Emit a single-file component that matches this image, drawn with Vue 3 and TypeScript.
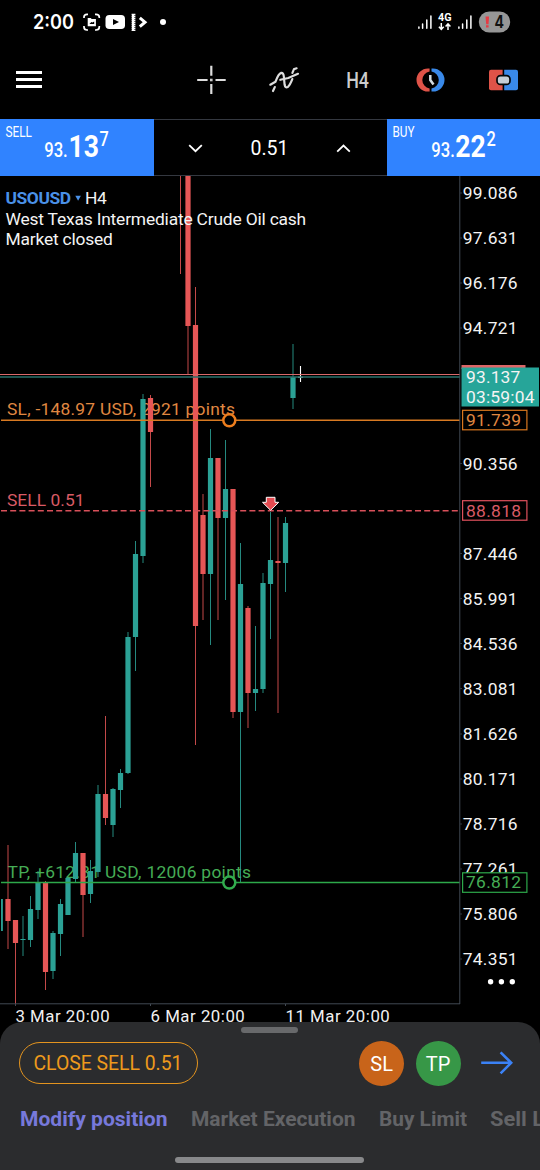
<script setup lang="ts">
type Candle = { x: number; high: number; low: number; top: number; bottom: number; up: boolean }

const raw: [number, number, number, number, number, number][] = [
  [8, 845, 949, 899, 921, 0],
  [15.5, 920, 1004, 920, 943, 0],
  [23, 916, 956, 939, 940, 1],
  [30.5, 896, 947, 909, 940, 1],
  [38, 871, 919, 882, 910, 1],
  [45.5, 881, 990, 883, 972, 0],
  [53, 931, 979, 933, 971, 1],
  [60.5, 899, 956, 904, 934, 1],
  [68, 877, 915, 878, 915, 1],
  [75.5, 842, 882, 853, 879, 1],
  [83, 853, 937, 853, 895, 0],
  [90.5, 860, 903, 871, 894, 1],
  [98, 785, 877, 794, 872, 1],
  [105.5, 716, 825, 794, 818, 0],
  [113, 788, 837, 789, 825, 1],
  [120.5, 769, 808, 773, 790, 1],
  [128, 632, 774, 637, 773, 1],
  [135.5, 541, 671, 554, 637, 1],
  [143, 394, 563, 399, 556, 1],
  [150.5, 395, 487, 398, 432, 0],
  [180.5, 170, 274, 170, 170, 0],
  [188, 170, 374, 170, 326, 0],
  [195.5, 287, 745, 325, 626, 0],
  [203, 494, 620, 515, 574, 0],
  [210.5, 429, 645, 458, 574, 1],
  [218, 458, 620, 458, 518, 0],
  [225.5, 440, 600, 489, 518, 1],
  [233, 489, 718, 489, 712, 0],
  [240.5, 543, 882, 584, 712, 1],
  [248, 606, 728, 608, 693, 0],
  [255.5, 626, 711, 689, 693, 1],
  [263, 573, 693, 583, 689, 1],
  [270.5, 512, 639, 560, 584, 1],
  [278, 517, 713, 561, 563, 0],
  [285.5, 517, 592, 523, 563, 1],
  [293, 344, 409, 377, 398, 1],
]
const candles: Candle[] = raw.map(([x, high, low, top, bottom, up]) => ({ x, high, low, top, bottom, up: up === 1 }))

const scale: { y: number; label: string }[] = [
  { y: 193, label: '99.086' },
  { y: 238, label: '97.631' },
  { y: 283, label: '96.176' },
  { y: 328, label: '94.721' },
  { y: 463.5, label: '90.356' },
  { y: 553.5, label: '87.446' },
  { y: 598.5, label: '85.991' },
  { y: 643.5, label: '84.536' },
  { y: 688.5, label: '83.081' },
  { y: 734, label: '81.626' },
  { y: 779, label: '80.171' },
  { y: 824, label: '78.716' },
  { y: 869, label: '77.261' },
  { y: 914, label: '75.806' },
  { y: 959, label: '74.351' },
]

const tabs: { label: string; width: number }[] = [
  { label: 'Modify position', width: 147.5 },
  { label: 'Market Execution', width: 164.5 },
  { label: 'Buy Limit', width: 88 },
  { label: 'Sell Limit', width: 92 },
]
</script>

<template>
  <div class="screen">
    <header class="status">
      <svg width="540" height="45" viewBox="0 0 540 45">
        <text x="33" y="28.7" class="clock" textLength="41" lengthAdjust="spacingAndGlyphs">2:00</text>
        <g fill="none" stroke="#fff" stroke-width="1.7">
          <path d="M84 18V17Q84 14.3 87 14.3H88M95 14.3H96Q99.3 14.3 99.3 17V18M99.3 26V27Q99.3 30 96 30H95M88 30H87Q84 30 84 27V26" />
        </g>
        <path fill="#fff" fill-rule="evenodd" d="M87.7 18h3l1 1h4.2v7.2H87.7z M89.4 24h4.8v-2.4l-1.8 1-1-.5z" />
        <rect x="105.5" y="15" width="19.5" height="14" rx="3.8" fill="#fff" />
        <path d="M113 19v6l6-3z" fill="#000" />
        <g fill="none" stroke="#fff">
          <path d="M133.5 13.8V31" stroke-width="3.8" stroke-dasharray="1.4 .6" />
          <path d="M133 14V30.5" stroke-width="2" />
          <path d="M139.8 17.8L145 22.2L139.8 26.6" stroke-width="3" />
        </g>
        <circle cx="163" cy="22" r="3" fill="#fff" />
        <g stroke="#fff" stroke-width="1.5" stroke-linecap="round">
          <path d="M418.9 27v1.2M422.6 24v4.2M426.8 20v8.2M430.9 16v12.2" />
          <path d="M458.9 27v1.2M462.6 24v4.2M466.8 20v8.2M470.9 16v12.2" />
        </g>
        <text x="438" y="20.6" class="net" textLength="13.5" lengthAdjust="spacingAndGlyphs">4G</text>
        <g fill="none" stroke="#fff" stroke-width="1.5">
          <path d="M441.3 23v6.2M438.9 26.7l2.4 2.6 2.4-2.6M448 30v-6.2M445.6 26.4l2.4-2.6 2.4 2.6" />
        </g>
        <rect x="478.8" y="11.5" width="31.4" height="21" rx="10.5" fill="#969696" />
        <path d="M485.5 16.5h3.6l-.6 7.7h-2.3zM486 25.2h2.6v2.4H486z" fill="#e73a43" />
        <text x="494.5" y="28" class="battery" textLength="9.5" lengthAdjust="spacingAndGlyphs">4</text>
      </svg>
    </header>

    <nav class="toolbar">
      <button class="tool menu"><span /><span /><span /></button>
      <button class="tool cross">
        <svg width="30" height="30" viewBox="196 64.5 30 30"><path d="M211.3 65.3v10M211.3 83.6v10M197.2 79.5h10.4M215.5 79.5h10.2" stroke="#ddd" stroke-width="2.2" /><rect x="210" y="78.2" width="2.6" height="2.6" fill="#ccc" /></svg>
      </button>
      <button class="tool indicator">
        <svg width="34" height="30" viewBox="267 64.5 34 30" fill="none" stroke="#ddd" stroke-width="2.2" stroke-linecap="round">
          <path d="M270.3 84.2L275.5 81.2Q278.5 73.2 281.2 72.4Q283.4 72 283.9 76.5L284.6 84Q285.2 88.2 288 86.3Q290 84.5 292.3 78.6" />
          <path d="M273 90.5L274.8 86.6M280.3 79.3L288.3 77.5L298 73.3M292.4 72.4L294 68.6L296.6 67.8" />
        </svg>
      </button>
      <button class="tool frame">
        <svg width="30" height="30" viewBox="343 64.5 30 30"><text x="346.2" y="87" class="timeframe" textLength="22.8" lengthAdjust="spacingAndGlyphs">H4</text></svg>
      </button>
      <button class="tool trade">
        <svg width="30" height="26" viewBox="416 66.5 30 26">
          <path d="M429.6 68H428A11.5 11.5 0 0 0 428 91H429.6V88A8.6 8.6 0 0 1 429.6 71Z" fill="#df5348" />
          <path d="M431.5 68H433A11.5 11.5 0 0 1 433 91H431.5V88A8.6 8.6 0 0 0 431.5 71Z" fill="#3989e9" />
          <path d="M430.3 74.5V79.5L433.5 84" fill="none" stroke="#d2dbe0" stroke-width="2.5" />
        </svg>
      </button>
      <button class="tool oneclick">
        <svg width="30" height="22" viewBox="489 68.5 30 22">
          <path d="M491 69.3H502.6V89.7H491Q489 89.7 489 87.7V71.3Q489 69.3 491 69.3Z" fill="#df5348" />
          <path d="M504.2 69.3H516Q518 69.3 518 71.3V87.7Q518 89.7 516 89.7H504.2Z" fill="#3989e9" />
          <rect x="497" y="75.1" width="13" height="8.8" rx="3.5" fill="#c5ced6" stroke="#05080a" stroke-width="1.7" />
        </svg>
      </button>
    </nav>

    <section class="quotes">
      <button class="quote">
        <svg width="153" height="56" viewBox="0 119 153 56">
          <text x="5.5" y="137" class="side" textLength="26.5" lengthAdjust="spacingAndGlyphs">SELL</text>
          <text x="44.2" y="157" class="small" textLength="23.5" lengthAdjust="spacingAndGlyphs">93.</text>
          <text x="68.5" y="157" class="large" textLength="30.5" lengthAdjust="spacingAndGlyphs">13</text>
          <text x="99.5" y="146" class="pip" textLength="9.3" lengthAdjust="spacingAndGlyphs">7</text>
        </svg>
      </button>
      <div class="volume">
        <svg width="15" height="9" viewBox="0 0 15 9"><path d="M1.2 1.2L7.5 7.2L13.8 1.2" fill="none" stroke="#fff" stroke-width="1.8" /></svg>
        <span>0.51</span>
        <svg width="15" height="9" viewBox="0 0 15 9"><path d="M1.2 7.6L7.5 1.6L13.8 7.6" fill="none" stroke="#fff" stroke-width="1.8" /></svg>
      </div>
      <button class="quote">
        <svg width="153" height="56" viewBox="386.5 119 153 56">
          <text x="392" y="137" class="side" textLength="22" lengthAdjust="spacingAndGlyphs">BUY</text>
          <text x="430.8" y="157" class="small" textLength="23.5" lengthAdjust="spacingAndGlyphs">93.</text>
          <text x="454.8" y="157" class="large" textLength="30.5" lengthAdjust="spacingAndGlyphs">22</text>
          <text x="486" y="146" class="pip" textLength="9.3" lengthAdjust="spacingAndGlyphs">2</text>
        </svg>
      </button>
    </section>

    <main class="chart">
      <svg width="540" height="846" viewBox="0 176 540 846">
        <text x="7" y="415" class="level c-sl" textLength="228">SL, -148.97 USD, 2921 points</text>
        <text x="7" y="505.5" class="level c-sell" textLength="77.5">SELL 0.51</text>
        <text x="7.5" y="877.5" class="level c-tp" textLength="243.5">TP, +612.31 USD, 12006 points</text>

        <rect x="1" y="899" width="1.9" height="32" fill="#2a9d91" />
        <g v-for="c in candles" :key="c.x" :fill="c.up ? '#2ba195' : '#e65656'">
          <rect :x="c.x - 0.5" :y="c.high" width="1" :height="c.low - c.high" opacity="0.85" />
          <rect :x="c.x - 2.6" :y="c.top" width="5.2" :height="c.bottom - c.top" />
        </g>
        <path d="M300.5 366V382M298 377.3H303" stroke="#fff" stroke-width="1.1" />

        <path d="M0 374.5H460" stroke="#d9696a" stroke-width="1.1" />
        <path d="M0 377H460" stroke="#2a706b" stroke-width="1.3" />
        <path d="M1 420.3H460" stroke="#d87a22" stroke-width="1.5" />
        <path d="M1 510.7H460" stroke="#d8505a" stroke-width="1.5" stroke-dasharray="6 3.2" />
        <path d="M1 882.6H460" stroke="#2da84a" stroke-width="1.5" />
        <circle cx="229.3" cy="420.3" r="6" fill="#000" stroke="#ed7d1d" stroke-width="2.5" />
        <circle cx="229.3" cy="882.6" r="6" fill="#000" stroke="#32ad4e" stroke-width="2.5" />
        <path d="M266.3 497.3H275V502.3H278.7L270.6 510.3L262.5 502.3H266.3Z" fill="#e54b51" stroke="#fff" stroke-width="1" />

        <path d="M459.8 176V1004M0 1003.8H460" fill="none" stroke="#414953" stroke-width="1" />
        <path v-for="s in scale" :key="s.label" :d="`M460 ${s.y}h2`" stroke="#303842" />
        <path d="M15.5 1004v2M150.5 1004v2M285.5 1004v2" stroke="#414953" />
        <text v-for="s in scale" :key="s.y" x="462.7" :y="s.y + 6" class="price" textLength="54.8">{{ s.label }}</text>

        <rect x="461.5" y="365" width="64" height="4" fill="#dc6567" />
        <rect x="461.5" y="367.5" width="77.5" height="39" fill="#26a599" />
        <text x="466" y="383.3" class="price" textLength="54.3">93.137</text>
        <text x="466" y="402.8" class="price" textLength="68.5">03:59:04</text>
        <g fill="#000" stroke-width="1.2">
          <rect x="462.6" y="410.3" width="64.3" height="19.5" stroke="#d9771e" />
          <rect x="462.6" y="500.7" width="64.3" height="19.5" stroke="#df515d" />
          <rect x="462.6" y="872.8" width="64.3" height="19.5" stroke="#2da84a" />
        </g>
        <text x="466" y="426.2" class="level c-sl" textLength="55">91.739</text>
        <text x="466" y="516.6" class="level c-sell" textLength="55">88.818</text>
        <text x="466" y="888.4" class="level c-tp" textLength="55">76.812</text>

        <text x="5.5" y="203.6" class="symbol" textLength="65.5">USOUSD</text>
        <path d="M75.3 195.7h5.6l-2.8 5z" fill="#4a91e8" />
        <text x="85" y="203.6" class="info" textLength="21.8">H4</text>
        <text x="5.5" y="224.5" class="info" textLength="300.7">West Texas Intermediate Crude Oil cash</text>
        <text x="5.5" y="244.5" class="info" textLength="107.3">Market closed</text>

        <g fill="#fff"><circle cx="490.6" cy="981.7" r="2.7" /><circle cx="501.4" cy="981.7" r="2.7" /><circle cx="512.3" cy="981.7" r="2.7" /></g>
        <text x="15.4" y="1021.6" class="date" textLength="94.3">3 Mar 20:00</text>
        <text x="150.5" y="1021.6" class="date" textLength="94.3">6 Mar 20:00</text>
        <text x="285.5" y="1021.6" class="date" textLength="104.3">11 Mar 20:00</text>
      </svg>
    </main>

    <footer class="sheet">
      <div class="grip" />
      <div class="actions">
        <button class="close"><svg width="150" height="24" viewBox="0 0 150 24"><text x="0.5" y="19.2" class="close-label" textLength="149" lengthAdjust="spacingAndGlyphs">CLOSE SELL 0.51</text></svg></button>
        <button class="round sl">SL</button>
        <button class="round tp">TP</button>
        <svg class="arrow" width="33" height="24" viewBox="480 1051 33 24"><path d="M481.2 1062.8H511M500.6 1052.3L511.2 1062.8L500.6 1073.3" fill="none" stroke="#3b82f6" stroke-width="2.6" /></svg>
      </div>
      <div class="tabs">
        <svg v-for="(t, i) in tabs" :key="t.label" :width="t.width" height="28" class="tab" :class="{ active: i === 0 }">
          <text x="0" y="20" :textLength="t.width" lengthAdjust="spacingAndGlyphs">{{ t.label }}</text>
        </svg>
      </div>
      <div class="home" />
    </footer>
  </div>
</template>

<style>
body { background: #000; }
</style>

<style scoped>
.screen { width: 540px; height: 1170px; overflow: hidden; background: #000; display: flex; flex-direction: column; font-family: Roboto, "Liberation Sans", sans-serif; color: #fff; }
button { appearance: none; border: 0; padding: 0; margin: 0; background: none; color: inherit; font: inherit; display: flex; align-items: center; justify-content: center; }
svg { display: block; flex: none; }
.status { height: 45px; }
.clock { font: 600 20px Inter, sans-serif; fill: #fff; }
.net { font: 700 10.5px Roboto, sans-serif; fill: #fff; }
.battery { font: 700 17px Inter, sans-serif; fill: #111; }
.toolbar { height: 74px; box-sizing: border-box; padding: 0 22px 5px 16px; display: flex; align-items: center; }
.tool { flex: none; }
.menu { width: 26px; flex-direction: column; gap: 4.3px; }
.menu span { width: 26px; height: 2.8px; background: #fff; }
.cross { margin-left: 154px; }
.indicator { margin-left: 41px; }
.frame { margin-left: 42px; }
.trade { margin-left: 43px; }
.oneclick { margin-left: 43px; }
.timeframe { font: 500 21.8px Roboto, sans-serif; fill: #ccc; }
.quotes { height: 57px; box-sizing: border-box; border-top: 1px solid #343840; border-bottom: 1.5px solid #343840; display: flex; }
.quote { width: 153.5px; height: 57px; margin-top: -1px; background: #3083ff; align-items: flex-start; justify-content: flex-start; }
.side { font: 400 14.8px Roboto, sans-serif; fill: #fff; }
.small { font: 500 20px Roboto, sans-serif; fill: #fff; }
.large { font: 700 31px Roboto, sans-serif; fill: #fff; }
.pip { font: 500 20px Roboto, sans-serif; fill: #fff; }
.volume { flex: 1; display: flex; align-items: center; justify-content: space-between; padding: 2px 35.5px 0 34.5px; font-size: 19.5px; }
.chart { height: 846px; }
.level, .price, .info { font: 400 17.4px Roboto, sans-serif; }
.price, .info { fill: #f4f4f4; }
.date { font: 400 16.8px Roboto, sans-serif; fill: #f0f0f0; }
.symbol { font: 700 17.4px Roboto, sans-serif; fill: #4a91e8; }
.c-sl { fill: #e08842; }
.c-sell { fill: #d95b65; }
.c-tp { fill: #45ad56; }
.sheet { height: 148px; background: #2b2c2e; border-radius: 22px 22px 0 0; display: flex; flex-direction: column; align-items: center; }
.grip { width: 57px; height: 6px; margin: 5px 1px 0 0; border-radius: 3px; background: #68696b; flex: none; }
.actions { width: 100%; height: 46px; margin-top: 7px; box-sizing: border-box; padding: 0 27px 0 19px; display: flex; align-items: center; }
.close { width: 179px; height: 42px; box-sizing: border-box; border: 1.5px solid #e3941f; border-radius: 21px; margin-right: 161.5px; }
.close-label { font: 400 20px Roboto, sans-serif; fill: #ee9a1c; }
.round { width: 45px; height: 45px; border-radius: 50%; font-size: 20px; padding-top: 1px; }
.sl { background: #c8641a; }
.tp { background: #379747; margin-left: 11.5px; }
.arrow { margin-left: 19.5px; }
.tabs { width: 100%; box-sizing: border-box; padding-left: 19.5px; margin-top: 20px; display: flex; gap: 23.5px; overflow: hidden; }
.tab { font: 700 21px Roboto, sans-serif; fill: #636467; }
.tab.active { fill: #7779db; }
.home { width: 189px; height: 6px; border-radius: 3px; background: #88898b; margin: 23px 1px 0 0; flex: none; }
</style>
